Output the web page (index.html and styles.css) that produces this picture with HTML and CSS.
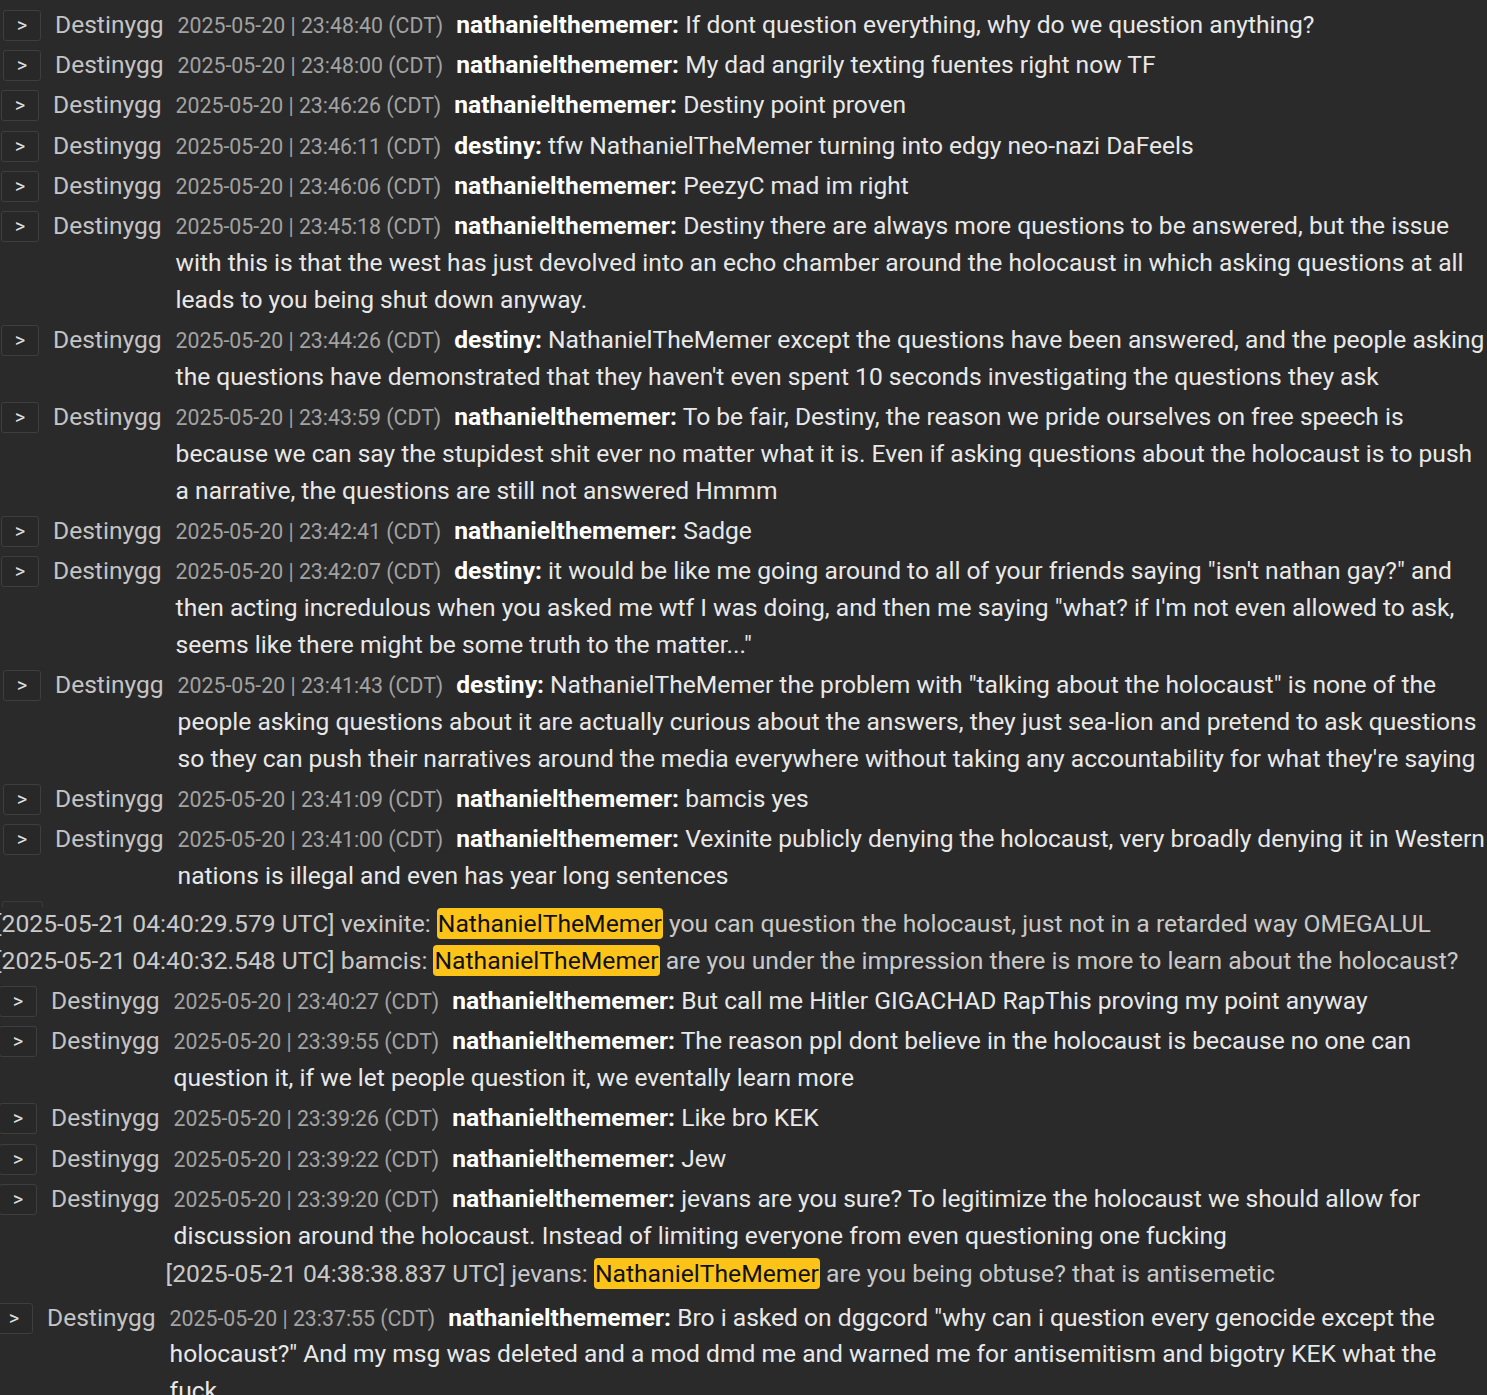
FILE: index.html
```html
<!DOCTYPE html>
<html lang="en">
<head>
<meta charset="utf-8">
<title>Chat log</title>
<link rel="stylesheet" href="styles.css">
</head>
<body>
<div class="log">
  <div class="row r2">
    <span class="btn">&gt;</span><span class="src">Destinygg</span>
    <div class="body"><span class="ts">2025-05-20 | 23:48:40 (CDT)</span><span class="user">nathanielthememer:</span> <span class="msg">If dont question everything, why do we question anything?</span></div>
  </div>
  <div class="row r2">
    <span class="btn">&gt;</span><span class="src">Destinygg</span>
    <div class="body"><span class="ts">2025-05-20 | 23:48:00 (CDT)</span><span class="user">nathanielthememer:</span> <span class="msg">My dad angrily texting fuentes right now TF</span></div>
  </div>
  <div class="row">
    <span class="btn">&gt;</span><span class="src">Destinygg</span>
    <div class="body"><span class="ts">2025-05-20 | 23:46:26 (CDT)</span><span class="user">nathanielthememer:</span> <span class="msg">Destiny point proven</span></div>
  </div>
  <div class="row">
    <span class="btn">&gt;</span><span class="src">Destinygg</span>
    <div class="body"><span class="ts">2025-05-20 | 23:46:11 (CDT)</span><span class="user">destiny:</span> <span class="msg">tfw NathanielTheMemer turning into edgy neo-nazi DaFeels</span></div>
  </div>
  <div class="row">
    <span class="btn">&gt;</span><span class="src">Destinygg</span>
    <div class="body"><span class="ts">2025-05-20 | 23:46:06 (CDT)</span><span class="user">nathanielthememer:</span> <span class="msg">PeezyC mad im right</span></div>
  </div>
  <div class="row">
    <span class="btn">&gt;</span><span class="src">Destinygg</span>
    <div class="body"><span class="ts">2025-05-20 | 23:45:18 (CDT)</span><span class="user">nathanielthememer:</span> <span class="msg">Destiny there are always more questions to be answered, but the issue with this is that the west has just devolved into an echo chamber around the holocaust in which asking questions at all leads to you being shut down anyway.</span></div>
  </div>
  <div class="row">
    <span class="btn">&gt;</span><span class="src">Destinygg</span>
    <div class="body"><span class="ts">2025-05-20 | 23:44:26 (CDT)</span><span class="user">destiny:</span> <span class="msg">NathanielTheMemer except the questions have been answered, and the people asking the questions have demonstrated that they haven't even spent 10 seconds investigating the questions they ask</span></div>
  </div>
  <div class="row">
    <span class="btn">&gt;</span><span class="src">Destinygg</span>
    <div class="body"><span class="ts">2025-05-20 | 23:43:59 (CDT)</span><span class="user">nathanielthememer:</span> <span class="msg">To be fair, Destiny, the reason we pride ourselves on free speech is because we can say the stupidest shit ever no matter what it is. Even if asking questions about the holocaust is to push a narrative, the questions are still not answered Hmmm</span></div>
  </div>
  <div class="row">
    <span class="btn">&gt;</span><span class="src">Destinygg</span>
    <div class="body"><span class="ts">2025-05-20 | 23:42:41 (CDT)</span><span class="user">nathanielthememer:</span> <span class="msg">Sadge</span></div>
  </div>
  <div class="row">
    <span class="btn">&gt;</span><span class="src">Destinygg</span>
    <div class="body"><span class="ts">2025-05-20 | 23:42:07 (CDT)</span><span class="user">destiny:</span> <span class="msg">it would be like me going around to all of your friends saying "isn't nathan gay?" and then acting incredulous when you asked me wtf I was doing, and then me saying "what? if I'm not even allowed to ask, seems like there might be some truth to the matter..."</span></div>
  </div>
  <div class="row r2">
    <span class="btn">&gt;</span><span class="src">Destinygg</span>
    <div class="body"><span class="ts">2025-05-20 | 23:41:43 (CDT)</span><span class="user">destiny:</span> <span class="msg">NathanielTheMemer the problem with "talking about the holocaust" is none of the people asking questions about it are actually curious about the answers, they just sea-lion and pretend to ask questions so they can push their narratives around the media everywhere without taking any accountability for what they're saying</span></div>
  </div>
  <div class="row r2">
    <span class="btn">&gt;</span><span class="src">Destinygg</span>
    <div class="body"><span class="ts">2025-05-20 | 23:41:09 (CDT)</span><span class="user">nathanielthememer:</span> <span class="msg">bamcis yes</span></div>
  </div>
  <div class="row r2">
    <span class="btn">&gt;</span><span class="src">Destinygg</span>
    <div class="body"><span class="ts">2025-05-20 | 23:41:00 (CDT)</span><span class="user">nathanielthememer:</span> <span class="msg">Vexinite publicly denying the holocaust, very broadly denying it in Western nations is illegal and even has year long sentences</span></div>
  </div>

  <div class="mentions">
    <div class="mention"><span class="seam-btn"></span>[2025-05-21 04:40:29.579 UTC] vexinite: <mark class="hl">NathanielTheMemer</mark> you can question the holocaust, just not in a retarded way OMEGALUL</div>
    <div class="mention">[2025-05-21 04:40:32.548 UTC] bamcis: <mark class="hl">NathanielTheMemer</mark> are you under the impression there is more to learn about the holocaust?</div>
  </div>

  <div class="row l2">
    <span class="btn">&gt;</span><span class="src">Destinygg</span>
    <div class="body"><span class="ts">2025-05-20 | 23:40:27 (CDT)</span><span class="user">nathanielthememer:</span> <span class="msg">But call me Hitler GIGACHAD RapThis proving my point anyway</span></div>
  </div>
  <div class="row l2">
    <span class="btn">&gt;</span><span class="src">Destinygg</span>
    <div class="body"><span class="ts">2025-05-20 | 23:39:55 (CDT)</span><span class="user">nathanielthememer:</span> <span class="msg">The reason ppl dont believe in the holocaust is because no one can question it, if we let people question it, we eventally learn more</span></div>
  </div>
  <div class="row l2">
    <span class="btn">&gt;</span><span class="src">Destinygg</span>
    <div class="body"><span class="ts">2025-05-20 | 23:39:26 (CDT)</span><span class="user">nathanielthememer:</span> <span class="msg">Like bro KEK</span></div>
  </div>
  <div class="row l2">
    <span class="btn">&gt;</span><span class="src">Destinygg</span>
    <div class="body"><span class="ts">2025-05-20 | 23:39:22 (CDT)</span><span class="user">nathanielthememer:</span> <span class="msg">Jew</span></div>
  </div>
  <div class="row l2">
    <span class="btn">&gt;</span><span class="src">Destinygg</span>
    <div class="body"><span class="ts">2025-05-20 | 23:39:20 (CDT)</span><span class="user">nathanielthememer:</span> <span class="msg">jevans are you sure? To legitimize the holocaust we should allow for discussion around the holocaust. Instead of limiting everyone from even questioning one fucking</span>
      <div class="mention inner">[2025-05-21 04:38:38.837 UTC] jevans: <mark class="hl">NathanielTheMemer</mark> are you being obtuse? that is antisemetic</div>
    </div>
  </div>
  <div class="row l6">
    <span class="btn">&gt;</span><span class="src">Destinygg</span>
    <div class="body"><span class="ts">2025-05-20 | 23:37:55 (CDT)</span><span class="user">nathanielthememer:</span> <span class="msg">Bro i asked on dggcord "why can i question every genocide except the holocaust?" And my msg was deleted and a mod dmd me and warned me for antisemitism and bigotry KEK what the fuck</span></div>
  </div>
</div>
</body>
</html>
```
FILE: styles.css
```css
html, body {
  margin: 0;
  padding: 0;
  background: #2a2a2a;
  overflow: hidden;
}

body {
  font-family: Roboto, "Noto Sans", "Liberation Sans", sans-serif;
  color: #e6e6e6;
}

.log {
  width: 1488px;
  padding-top: 6.5px;
  display: flex;
  flex-direction: column;
  gap: 3.6px;
}

.row {
  display: flex;
  align-items: flex-start;
  font-size: 24.6px;
  line-height: 36.75px;
  padding-left: 1px;
}

.row.r2 { padding-left: 3px; }
.row.l2 { padding-left: 0; margin-left: -1px; }
.row.l6 { padding-left: 0; margin-left: -5px; }

.btn {
  flex: none;
  box-sizing: border-box;
  width: 38px;
  height: 31px;
  margin-top: 3px;
  margin-right: 14px;
  border: 1px solid #3e3e3e;
  border-radius: 3px;
  background: #282828;
  color: #dedede;
  font-size: 20px;
  line-height: 28px;
  text-align: center;
}

.src {
  flex: none;
  color: #c4c4c4;
  white-space: nowrap;
  margin-right: 14px;
}

.body {
  flex: 1;
  min-width: 0;
}

.ts {
  font-size: 21.3px;
  line-height: 20px;
  color: #a2a2a2;
  margin-right: 13px;
}

.user {
  font-weight: 700;
  color: #ffffff;
}

.msg {
  color: #e8e8e8;
}

.mentions {
  margin-top: 6.8px;
}

.mention {
  position: relative;
  font-size: 24.7px;
  line-height: 37px;
  color: #c9c9c9;
  margin-left: -5px;
  white-space: nowrap;
}

.seam-btn {
  position: absolute;
  left: 7px;
  top: -4px;
  width: 39px;
  height: 5px;
  border: 1px solid #3a3a3a;
  border-bottom: none;
  border-radius: 3px 3px 0 0;
}

.mention.inner {
  margin-left: -8px;
  margin-top: 1px;
  margin-bottom: 3.5px;
}

.hl {
  background: #fcc419;
  color: #111;
  border-radius: 4px;
  padding: 1px 1px;
  line-height: 28px;
}
```
